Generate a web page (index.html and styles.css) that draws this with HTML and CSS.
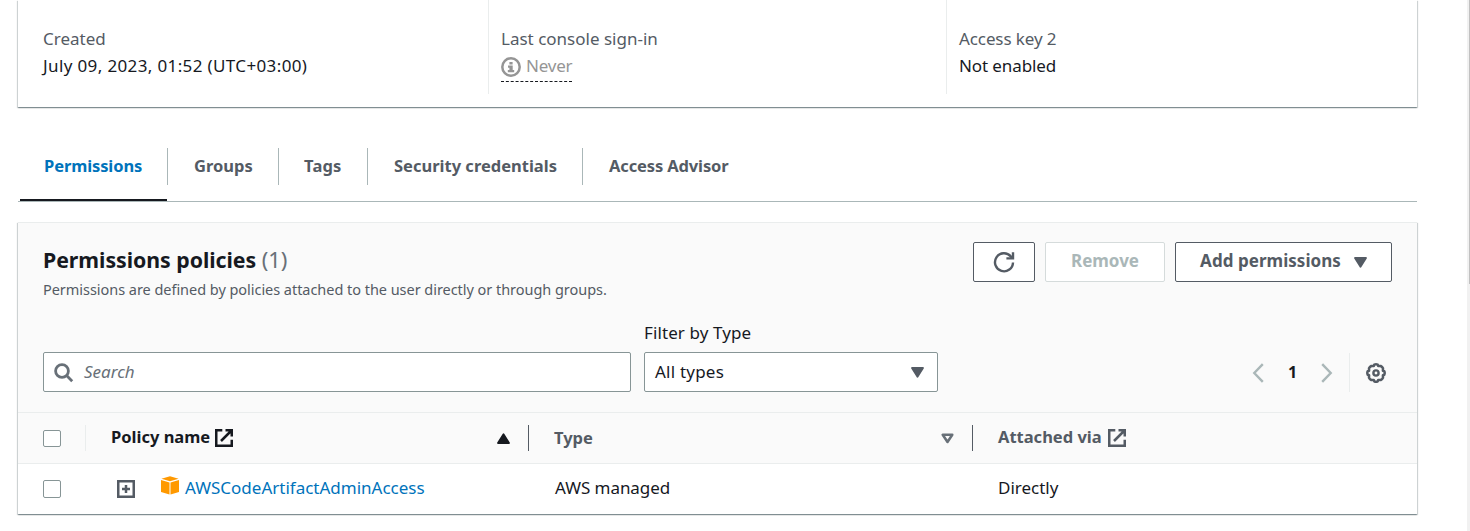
FILE: index.html
```html
<!DOCTYPE html>
<html lang="en">
<head>
<meta charset="utf-8">
<title>IAM user permissions</title>
<link rel="stylesheet" href="styles.css">
</head>
<body>
<main class="page">
  <section class="card summary">
    <div class="field"><div class="label">Created</div><div class="value date">July 09, 2023, 01:52 (UTC+03:00)</div></div>
    <div class="field"><div class="label">Last console sign-in</div><div class="never"><svg width="20" height="20" viewBox="0 0 20 20"><circle cx="10" cy="10" r="8.7" fill="none" stroke="#959595" stroke-width="2.5"/><path d="M8.400 5h3.200v2.500H8.400zM7 8.500h4.700v4.500H13.200v2.200H6.800V13h1.600v-2.300H7z" fill="#959595"/></svg><span>Never</span></div></div>
    <div class="field key"><div class="label">Access key 2</div><div class="value">Not enabled</div></div>
  </section>

  <nav class="tabs">
    <a class="tab active"><span>Permissions</span></a>
    <a class="tab groups"><span>Groups</span></a>
    <a class="tab tags"><span>Tags</span></a>
    <a class="tab security"><span>Security credentials</span></a>
    <a class="tab advisor"><span>Access Advisor</span></a>
  </nav>

  <section class="card policies">
    <header class="head">
      <div>
        <h2>Permissions policies <span class="count">(1)</span></h2>
        <p class="desc">Permissions are defined by policies attached to the user directly or through groups.</p>
      </div>
      <div class="actions">
        <button class="btn refresh"><svg width="22" height="22" viewBox="0 0 22 22" fill="none" stroke="#545b64" stroke-width="2.4"><path d="M20 11.400A9 9 0 1 1 17.800 5.400L19 7"/><path d="M20 1.200v6.200h-6.600"/></svg></button>
        <button class="btn remove" disabled>Remove</button>
        <button class="btn add">Add permissions<svg width="13" height="11" viewBox="0 0 13 11"><path d="M1 1h11L6.500 9.800z" fill="#545b64" stroke="#545b64" stroke-width="1.800" stroke-linejoin="round"/></svg></button>
      </div>
    </header>

    <div class="filters">
      <div class="search"><svg width="20" height="20" viewBox="0 0 20 20" fill="none" stroke="#687078" stroke-width="2.800"><circle cx="8" cy="8" r="6.400"/><path d="M12.600 12.600l5.600 5.600"/></svg><span>Search</span></div>
      <div class="type-filter">
        <div class="filter-label">Filter by Type</div>
        <div class="select"><span>All types</span><svg width="13" height="11" viewBox="0 0 13 11"><path d="M1 1h11L6.500 9.800z" fill="#545b64" stroke="#545b64" stroke-width="1.800" stroke-linejoin="round"/></svg></div>
      </div>
      <div class="pager">
        <svg class="prev" width="12" height="20" viewBox="0 0 12 20" fill="none" stroke="#aab7b8" stroke-width="2.400"><path d="M10.800 1.200L2.300 10l8.500 8.800"/></svg>
        <b>1</b>
        <svg class="next" width="12" height="20" viewBox="0 0 12 20" fill="none" stroke="#aab7b8" stroke-width="2.400"><path d="M1.200 1.200L9.700 10l-8.500 8.800"/></svg>
        <span class="gear"><svg width="20" height="20" viewBox="0 0 20 20" fill="none" stroke="#545b64" stroke-linejoin="round"><path stroke-width="2.500" d="M8.300 1.700Q10 .9 11.700 1.700L12.200 3.100 14.700 3Q16.300 3.700 17 5.300L16.900 7.800 18.300 8.300Q19.100 10 18.300 11.700L16.900 12.200 17 14.700Q16.300 16.300 14.700 17L12.200 16.900 11.700 18.300Q10 19.100 8.300 18.300L7.800 16.900 5.300 17Q3.700 16.300 3 14.700L3.100 12.200 1.700 11.700Q.9 10 1.700 8.300L3.100 7.800 3 5.300Q3.700 3.700 5.300 3L7.800 3.100z"/><circle cx="10" cy="10" r="2.600" stroke-width="2.400"/></svg></span>
      </div>
    </div>

    <div class="row header-row">
      <div class="cell check-cell"><i class="checkbox"></i></div>
      <div class="cell name-head"><span>Policy name</span><svg class="ext" width="18" height="18" viewBox="0 0 18 18" fill="none" stroke="#16191f" stroke-width="2.500"><path d="M7.300 1.250H1.250v15.500h15.500v-6M10.500 1.250h6.250V7.500M16.500 1.500L6 12"/></svg><svg class="sort" width="13" height="11" viewBox="0 0 13 11"><path d="M1 10h11L6.500 1.200z" fill="#16191f" stroke="#16191f" stroke-width="1.800" stroke-linejoin="round"/></svg></div>
      <div class="cell type-head"><span>Type</span><svg class="sort" width="13" height="11" viewBox="0 0 13 11"><path d="M1.700 1.700h9.600L6.500 9z" fill="none" stroke="#687078" stroke-width="2.500" stroke-linejoin="round"/></svg></div>
      <div class="cell via-head"><span>Attached via</span><svg class="ext" width="18" height="18" viewBox="0 0 18 18" fill="none" stroke="#545b64" stroke-width="2.500"><path d="M7.300 1.250H1.250v15.500h15.500v-6M10.500 1.250h6.250V7.500M16.500 1.500L6 12"/></svg></div>
    </div>
    <div class="row body-row">
      <div class="cell check-cell"><i class="checkbox"></i></div>
      <div class="cell name-cell"><svg class="plus" width="18" height="18" viewBox="0 0 18 18" fill="none" stroke="#545b64" stroke-width="2.500"><path d="M1.250 1.250h15.500v15.500H1.250zM9 5v8M5 9h8"/></svg><svg class="cube" width="18" height="19" viewBox="0 0 18 19" fill="#ff9900"><path d="M9 .3l8.600 2.500L9 5.300.4 2.800zM0 4l8.500 2.500v12L0 16zM18 4L9.500 6.500v12L18 16z"/></svg><a>AWSCodeArtifactAdminAccess</a></div>
      <div class="cell type-cell">AWS managed</div>
      <div class="cell">Directly</div>
    </div>
  </section>
</main>
<div class="scrollbar"><i></i></div>
</body>
</html>
```
FILE: styles.css
```css
* { box-sizing: border-box; }
body {
  margin: 0;
  height: 531px;
  overflow: hidden;
  display: flex;
  justify-content: space-between;
  background: #fff;
  color: #16191f;
  font: 17px/27px "Noto Sans", sans-serif;
}
svg { display: block; flex: none; }
h2, p { margin: 0; }
.page { width: 1399px; margin-left: 18px; }
.card {
  background: #fff;
  box-shadow: 0 1px 1px rgba(0, 28, 36, .3), 1px 1px 1px rgba(0, 28, 36, .15), -1px 1px 1px rgba(0, 28, 36, .15);
}

.summary { height: 107px; display: grid; grid-template-columns: 470px 458px 1fr; }
.field { height: 94px; padding: 25px 0 0 12px; border-left: 1px solid #eaeded; }
.field:first-child { padding-left: 25px; border-left: 0; }
.key { letter-spacing: -.1px; }
.label { color: #545b64; }
.date { letter-spacing: .37px; }
.never {
  width: 71px;
  height: 30px;
  display: flex;
  gap: 5px;
  color: #959595;
  border-bottom: 1px dashed #16191f;
  letter-spacing: -.2px;
}
.never svg { margin-top: 5px; }

.tabs {
  height: 54px;
  margin-top: 41px;
  padding-left: 2px;
  display: flex;
  border-bottom: 1px solid #aab7b8;
  font-size: 16.500px;
  font-weight: 700;
  color: #545b64;
}
.tab { height: 53px; }
.tab span { display: block; height: 37px; padding: 4px 25px 0 26px; border-left: 1px solid #aab7b8; line-height: 28px; }
.active { width: 147px; color: #0073bb; border-bottom: 2px solid #16191f; letter-spacing: -.1px; }
.tab.active span { padding-left: 24px; border-left: 0; }
.groups { width: 111px; }
.tags { width: 89px; }
.tags span { padding-left: 25px; letter-spacing: .2px; }
.security { width: 215px; }
.advisor span { letter-spacing: -.13px; }

.policies { margin-top: 20px; border-top: 1px solid #eaeded; height: 292px; }
.head { height: 110px; padding: 18px 25px 0; display: flex; justify-content: space-between; background: #fafafa; }
h2 { font-size: 21.300px; line-height: 36px; letter-spacing: -.04px; }
.count { font-size: 22px; font-weight: 400; color: #687078; }
.desc { font-size: 14.500px; line-height: 24px; color: #545b64; letter-spacing: -.04px; margin-top: -1px; }
.actions { display: flex; gap: 10px; padding-top: 1px; }
.btn {
  height: 40px;
  padding: 0 0 2px;
  display: flex;
  align-items: center;
  justify-content: center;
  border: 1px solid #545b64;
  border-radius: 2px;
  background: #fff;
  color: #545b64;
  font: 700 17px/28px "Noto Sans", sans-serif;
}
.refresh { width: 62px; padding-bottom: 0; }
.remove { width: 120px; border-color: #d5dbdb; color: #aab7b8; }
.add { width: 217px; gap: 13px; letter-spacing: .04px; }
.add svg { margin-top: 2px; }

.filters { height: 79px; padding: 0 25px; display: flex; background: #fafafa; }
.search, .select { height: 40px; display: flex; border: 1px solid #879596; border-radius: 2px; background: #fff; line-height: 37px; }
.search { width: 588px; margin: 19px 13px 0 0; padding-left: 10px; gap: 10px; font-style: italic; color: #687078; }
.search svg { margin-top: 10px; }
.type-filter { width: 294px; margin-top: -14px; }
.filter-label { height: 33px; line-height: 27px; letter-spacing: .1px; }
.select { padding: 0 13px 0 10px; justify-content: space-between; letter-spacing: .22px; }
.select svg { margin-top: 14px; }
.pager { flex: 1; height: 39px; margin-top: 20px; display: flex; justify-content: flex-end; }
.pager b { width: 57px; text-align: center; font-size: 16px; line-height: 38px; }
.prev, .next { margin-top: 10px; }
.gear { margin-left: 16px; padding: 10px 6px 0 16px; border-left: 1px solid #eaeded; }

.row { display: grid; grid-template-columns: 67px 444px 444px 1fr; border-top: 1px solid #eaeded; height: 51px; }
.header-row { grid-template-columns: 67px 443px 444px 1fr; background: #fafafa; padding: 12px 0; font-size: 16.500px; font-weight: 700; color: #545b64; }
.cell { display: flex; padding-left: 25px; line-height: 48px; }
.header-row .cell { border-left: 1px solid #545b64; line-height: 24px; }
.header-row .cell.check-cell { border-left: 0; }
.header-row .name-head { border-left-color: #eaeded; color: #16191f; }
.header-row .type-head { line-height: 26px; }
.checkbox { width: 18px; height: 18px; margin-top: 16px; border: 1px solid #879596; border-radius: 2px; background: #fff; }
.header-row .checkbox { height: 17px; margin-top: 5px; }
.ext { margin: 4px 0 0 6px; }
.name-head .ext { margin-left: 5px; }
.sort { margin: 8px 18px 0 auto; }
.plus { margin: 16px 26px 0 7px; }
.cube { margin: 12px 6px 0 0; }
.name-cell a { color: #0073bb; }
.type-cell { padding-left: 26px; letter-spacing: -.05px; }

.scrollbar { width: 3px; height: 531px; background: #f1f1f1; }
.scrollbar i { display: block; width: 1px; height: 284px; margin-left: 2px; background: #c1c1c1; }
```
